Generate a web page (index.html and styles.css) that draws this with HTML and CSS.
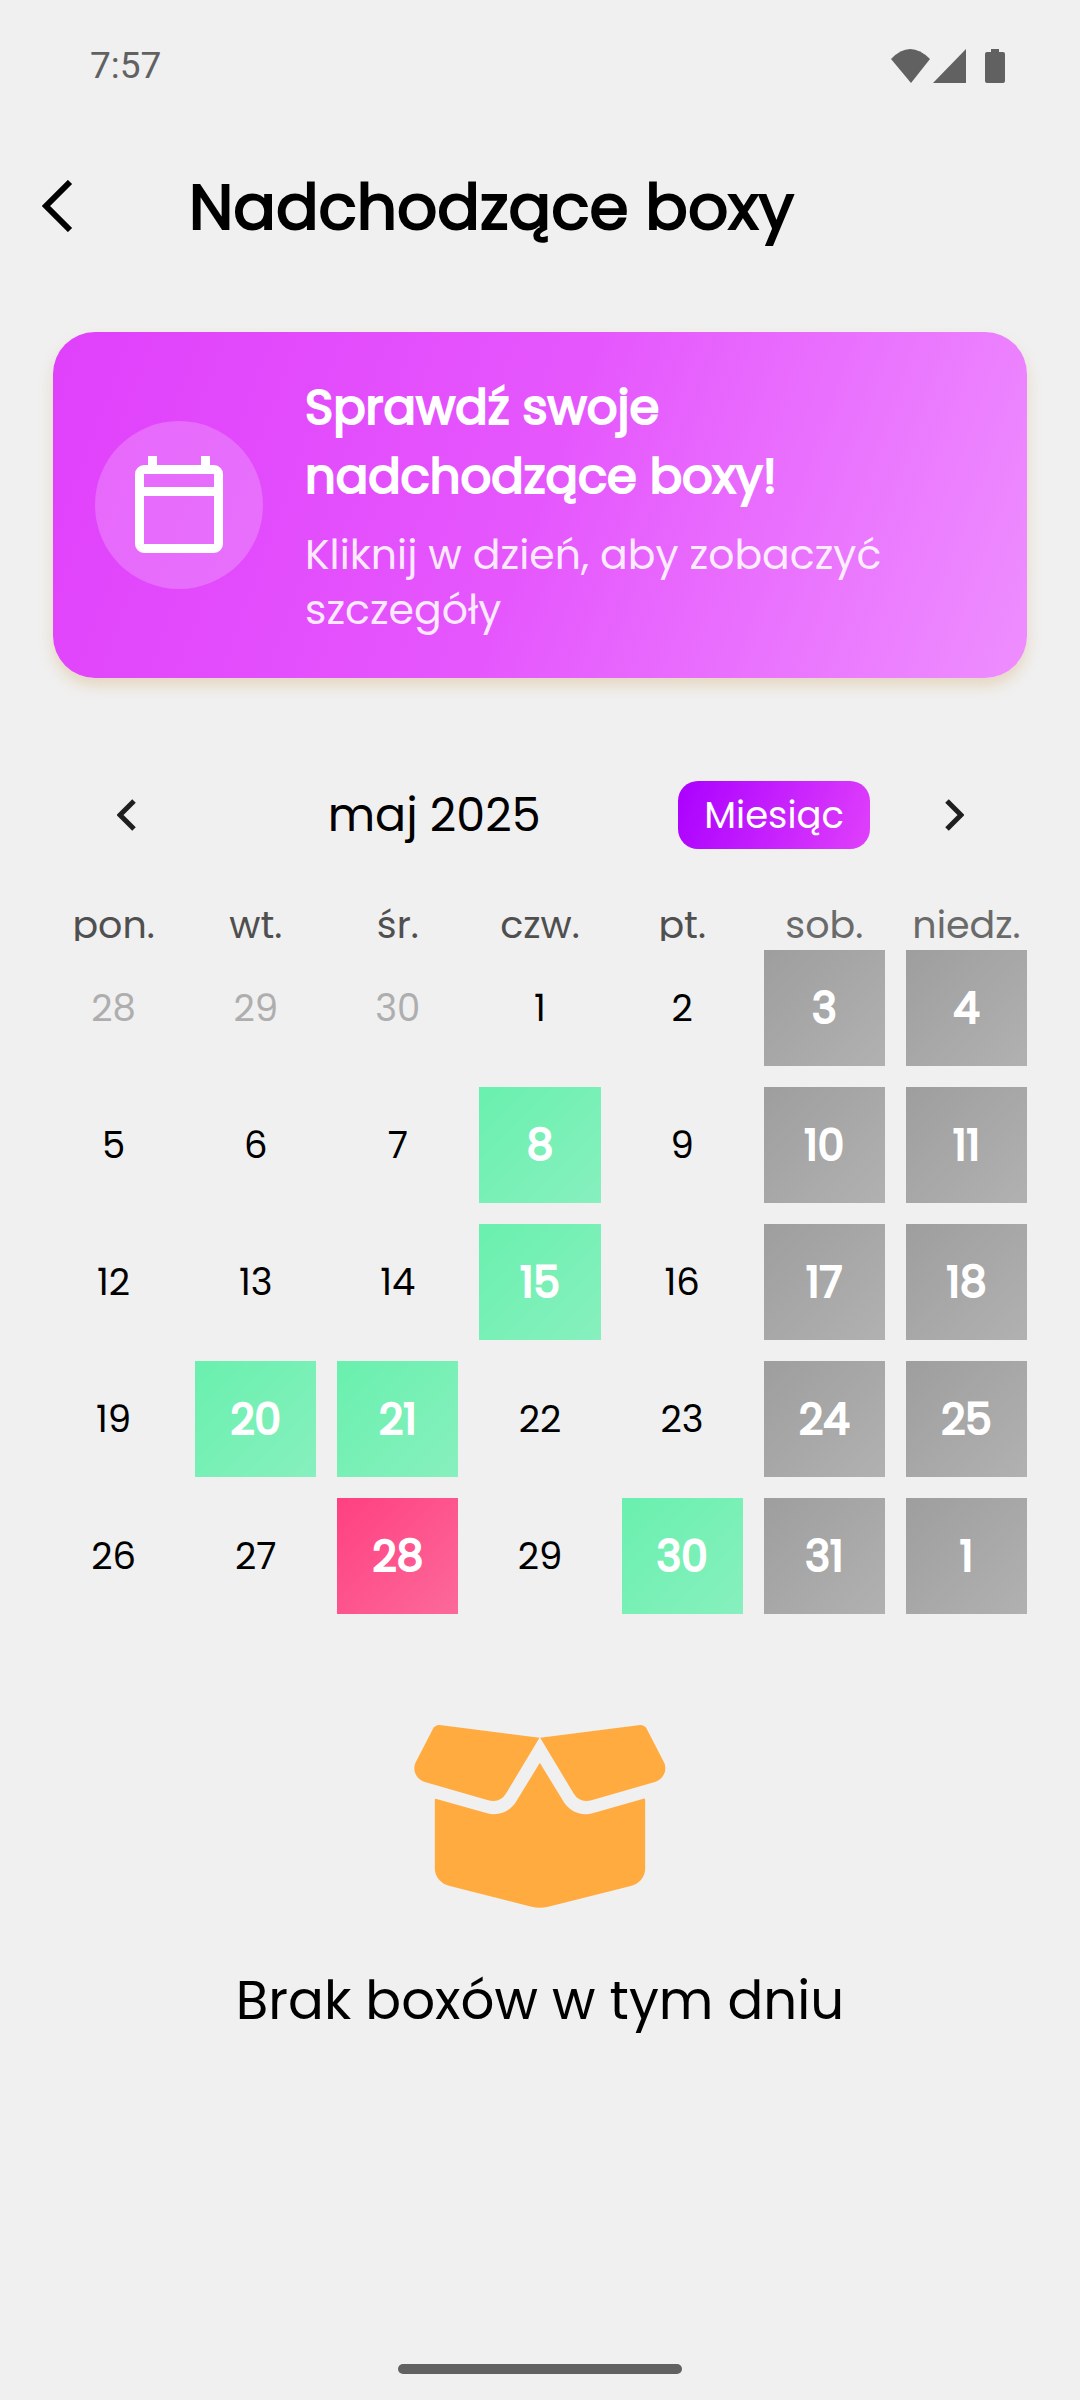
FILE: index.html
```html
<!DOCTYPE html>
<html lang="pl">
<head>
<meta charset="utf-8">
<meta name="viewport" content="width=device-width, initial-scale=1">
<title>Nadchodzące boxy</title>
<link rel="stylesheet" href="styles.css">
</head>
<body>
<div class="screen">
  <div class="status">
    <span class="clock">7:57</span>
    <div class="status-icons">
      <svg class="wifi" viewBox="0 0 39 34" aria-hidden="true"><path d="M0 10Q19-10 39 10L20 34Z"/></svg>
      <svg class="signal" viewBox="0 0 33 34" aria-hidden="true"><path d="M33 0V34H0Z"/></svg>
      <svg class="battery" viewBox="0 0 20 34" aria-hidden="true"><path d="M6 0h8v3h4a2 2 0 0 1 2 2v27a2 2 0 0 1-2 2H2a2 2 0 0 1-2-2V5a2 2 0 0 1 2-2h4z"/></svg>
    </div>
  </div>

  <header class="appbar">
    <button class="back" aria-label="Wstecz"><svg viewBox="0 0 32 52" aria-hidden="true"><path d="M28 2L4 26L28 50"/></svg></button>
    <h1>Nadchodzące boxy</h1>
  </header>

  <main>
    <section class="banner">
      <div class="banner-icon">
        <svg viewBox="0 0 88 98" aria-hidden="true"><path fill-rule="evenodd" d="M13 0h9v9h44V0h9v9h4a9 9 0 0 1 9 9v70a9 9 0 0 1-9 9H9a9 9 0 0 1-9-9V18a9 9 0 0 1 9-9h4zM9 18v13h70V18zM9 40v48h70V40z"/></svg>
      </div>
      <div class="banner-text">
        <h2>Sprawdź swoje nadchodzące boxy!</h2>
        <p>Kliknij w dzień, aby zobaczyć szczegóły</p>
      </div>
    </section>

    <section class="calendar">
      <div class="month-bar">
        <button class="step" aria-label="Poprzedni miesiąc"><svg viewBox="0 0 20 32" aria-hidden="true"><path d="M17 2L3 16L17 30"/></svg></button>
        <div class="month">maj 2025</div>
        <button class="format">Miesiąc</button>
        <button class="step" aria-label="Następny miesiąc"><svg viewBox="0 0 20 32" aria-hidden="true"><path d="M3 2L17 16L3 30"/></svg></button>
      </div>
      <table>
        <thead>
          <tr><th>pon.</th><th>wt.</th><th>śr.</th><th>czw.</th><th>pt.</th><th class="weekend">sob.</th><th class="weekend">niedz.</th></tr>
        </thead>
        <tbody>
          <tr><td><button class="out">28</button></td><td><button class="out">29</button></td><td><button class="out">30</button></td><td><button>1</button></td><td><button>2</button></td><td><button class="mark off">3</button></td><td><button class="mark off">4</button></td></tr>
          <tr><td><button>5</button></td><td><button>6</button></td><td><button>7</button></td><td><button class="mark box">8</button></td><td><button>9</button></td><td><button class="mark off">10</button></td><td><button class="mark off">11</button></td></tr>
          <tr><td><button>12</button></td><td><button>13</button></td><td><button>14</button></td><td><button class="mark box">15</button></td><td><button>16</button></td><td><button class="mark off">17</button></td><td><button class="mark off">18</button></td></tr>
          <tr><td><button>19</button></td><td><button class="mark box">20</button></td><td><button class="mark box">21</button></td><td><button>22</button></td><td><button>23</button></td><td><button class="mark off">24</button></td><td><button class="mark off">25</button></td></tr>
          <tr><td><button>26</button></td><td><button>27</button></td><td><button class="mark chosen">28</button></td><td><button>29</button></td><td><button class="mark box">30</button></td><td><button class="mark off">31</button></td><td><button class="mark off">1</button></td></tr>
        </tbody>
      </table>
    </section>

    <section class="empty">
      <svg viewBox="102 107 755 549" aria-hidden="true">
        <path d="M178 107L478 145L378 312Q360 342 324 333L134 278C108 270 95 242 107 218L157 121Q163 107 178 107Z"/>
        <path d="M780 107L480 145L580 312Q598 342 634 333L824 278C850 270 863 242 851 218L801 121Q795 107 780 107Z"/>
        <path d="M479 222Q481 222 483 227L549 335C567 365 600 381 637 372L790 328Q795 327 795 332V538C795 562 777 584 752 590L504 652Q479 658 454 652L209 590C183 584 164 562 164 538V332Q164 327 169 329L321 372C358 381 391 365 409 335L475 227Q477 222 479 222Z"/>
      </svg>
      <p>Brak boxów w tym dniu</p>
    </section>
  </main>
  <div class="home-bar"></div>
</div>
</body>
</html>
```
FILE: styles.css
```css
* {
  box-sizing: border-box;
  margin: 0;
  padding: 0;
}

body {
  background: #f0f0f0;
  color: #000;
  font-family: Poppins, Inter, "Open Sans", sans-serif;
  font-feature-settings: "cv11";
}

button {
  border: 0;
  background: none;
  color: inherit;
  font: inherit;
  font-feature-settings: inherit;
  cursor: pointer;
}

svg {
  display: block;
}

.screen {
  display: flex;
  flex-direction: column;
  min-height: 100vh;
}

.status {
  display: flex;
  align-items: center;
  justify-content: space-between;
  height: 132px;
  padding: 0 75px 0 90px;
  color: #616161;
  font: 37px/44px Roboto, sans-serif;
}

.status-icons {
  display: flex;
  height: 34px;
}

.status-icons svg {
  height: 34px;
  fill: currentColor;
}

.wifi {
  width: 39px;
  margin-right: 3px;
}

.signal {
  width: 33px;
  margin-right: 19px;
}

.battery {
  width: 20px;
}

.appbar {
  display: flex;
  align-items: center;
  height: 147px;
}

.back {
  width: 147px;
  height: 147px;
  margin-right: 42px;
  padding-left: 42px;
}

.back svg {
  width: 32px;
  height: 52px;
  fill: none;
  stroke: #000;
  stroke-width: 6;
}

h1 {
  padding-top: 2px;
  font-size: 63px;
  font-weight: 400;
  line-height: 84px;
  -webkit-text-stroke: 2px currentColor;
}

main {
  padding: 53px 53px 0;
}

.banner {
  display: flex;
  align-items: center;
  gap: 42px;
  padding: 41px 42px;
  border-radius: 42px;
  background: linear-gradient(110deg, #e040fb, #e557fd 50%, #ee8eff);
  box-shadow: 0 8px 14px rgba(205, 150, 75, 0.28);
  color: #fff;
}

.banner-icon {
  display: grid;
  flex: none;
  place-items: center;
  width: 168px;
  height: 168px;
  border-radius: 50%;
  background: rgba(255, 255, 255, 0.2);
}

.banner-icon svg {
  width: 88px;
  height: 98px;
  fill: #fff;
}

.banner-text {
  flex: 1;
}

h2 {
  max-width: 560px;
  margin-bottom: 16px;
  font-size: 48px;
  font-weight: 400;
  line-height: 69px;
  -webkit-text-stroke: 2px currentColor;
}

.banner p {
  color: rgba(255, 255, 255, 0.88);
  font-size: 41px;
  line-height: 55px;
}

.month-bar {
  display: flex;
  align-items: center;
  margin-top: 84px;
  height: 106px;
}

.step {
  display: grid;
  flex: none;
  place-items: center;
  width: 147px;
  height: 105px;
}

.step svg {
  width: 20px;
  height: 32px;
  fill: none;
  stroke: #1f1f1f;
  stroke-width: 5;
}

.month {
  flex: 1;
  font-size: 46px;
  line-height: 68px;
  text-align: center;
}

.format {
  height: 68px;
  margin: 0 10px;
  padding: 0 26px;
  border-radius: 20px;
  background: linear-gradient(110deg, #aa00ff, #e040fb);
  color: #fff;
  font-size: 37px;
}

table,
thead,
tbody {
  display: block;
}

table {
  margin-top: 31px;
}

tr {
  display: grid;
  grid-template-columns: repeat(7, minmax(0, 1fr));
  gap: 21px;
}

tbody {
  display: grid;
  gap: 21px;
  margin-top: 9px;
}

th {
  display: flex;
  justify-content: center;
  height: 42px;
  overflow: hidden;
  color: #4f4f4f;
  font-size: 38px;
  font-weight: 400;
  line-height: 52px;
}

th.weekend {
  color: #6a6a6a;
}

td button {
  display: block;
  width: 100%;
  height: 116px;
  font-size: 37px;
}

td .out {
  color: #aeaeae;
}

td .mark {
  color: #fff;
  font-size: 42px;
  -webkit-text-stroke: 2px currentColor;
}

td .off {
  background: linear-gradient(135deg, #9e9e9e, #b1b1b1);
}

td .box {
  background: linear-gradient(135deg, #69f0ae, #87f0be);
}

td .chosen {
  background: linear-gradient(135deg, #ff4081, #fc699a);
}

.empty {
  display: flex;
  flex-direction: column;
  align-items: center;
  gap: 53px;
  margin-top: 111px;
}

.empty svg {
  width: 252px;
  height: 183px;
  fill: #ffab40;
}

.empty p {
  font-size: 53px;
  line-height: 80px;
}

.home-bar {
  width: 284px;
  height: 10px;
  margin: auto auto 26px;
  border-radius: 5px;
  background: #616161;
}
```
